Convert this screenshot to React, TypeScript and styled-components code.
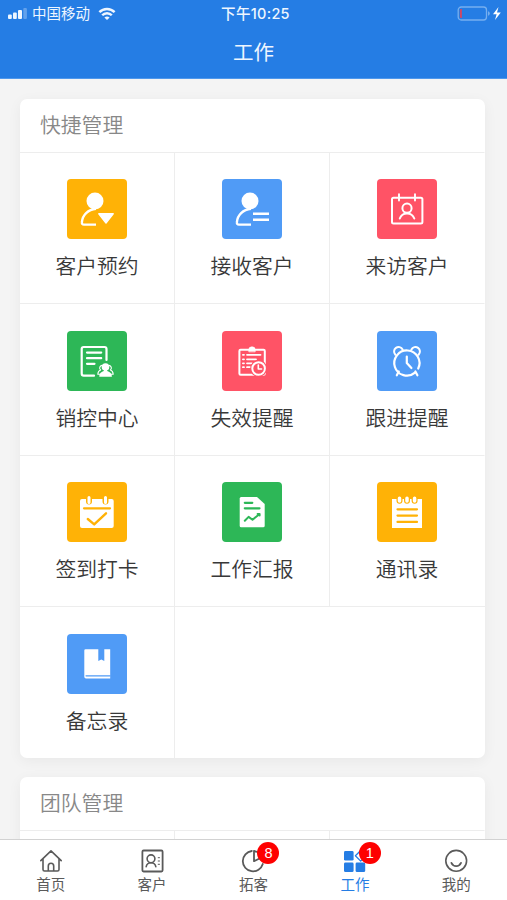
import React from 'react';
import styled, { createGlobalStyle } from 'styled-components';

const YELLOW = '#ffb206';
const BLUE = '#509bf6';
const RED = '#ff5366';
const GREEN = '#2db757';
const PRIMARY = '#257de4';

const GlobalStyle = createGlobalStyle`
  * { box-sizing: border-box; }
  body {
    margin: 0;
    background: #f4f4f4;
    font-family: Inter, "Noto Sans CJK SC", sans-serif;
  }
`;

const Screen = styled.div`
  display: flex;
  flex-direction: column;
  height: 900px;
  overflow: hidden;
`;

const Header = styled.header`
  flex: none;
  height: 79px;
  background: ${PRIMARY};
  color: #eef6ff;
  border-bottom: 1px solid #4f98ec;
`;

const StatusBar = styled.div`
  display: grid;
  grid-template-columns: 1fr auto 1fr;
  align-items: center;
  height: 27px;
  padding: 0 5px 0 8px;
  font-size: 14.5px;
  line-height: 27px;
`;

const Carrier = styled.div`
  display: flex;
  align-items: center;
  gap: 5px;
  span + svg { margin-left: 3px; }
`;

const Clock = styled.div`
  font-size: 14.5px;
  font-weight: 500;
  letter-spacing: 0.3px;
  padding-left: 1px;
`;

const Power = styled.div`
  display: flex;
  justify-content: flex-end;
  align-items: center;
`;

const PageTitle = styled.h1`
  margin: 0;
  font-size: 20.5px;
  font-weight: 400;
  line-height: 52px;
  text-align: center;
`;

const Content = styled.main`
  flex: 1;
  min-height: 0;
  overflow: hidden;
  display: flex;
  flex-direction: column;
  gap: 19.5px;
  padding: 20px 22px 0 20px;
`;

const Card = styled.section`
  flex: none;
  background: #fff;
  border-radius: 7px;
  box-shadow: 0 3px 14px rgba(0, 0, 0, 0.05);
  overflow: hidden;
`;

const CardTitle = styled.h2`
  margin: 0;
  height: 52.5px;
  padding-left: 20px;
  color: #888;
  font-size: 20.8px;
  font-weight: 350;
  line-height: 54px;
`;

const Grid = styled.div`
  display: grid;
  grid-template-columns: 155px 155px 155px;
  grid-auto-rows: 151.5px;
`;

const Cell = styled.div<{ $last?: boolean }>`
  display: flex;
  flex-direction: column;
  align-items: center;
  padding-top: 26.5px;
  border-top: 1px solid #ededed;
  border-right: 1px solid ${(p) => (p.$last ? 'transparent' : '#ededed')};
`;

const Filler = styled.div`
  grid-column: span 2;
  border-top: 1px solid #ededed;
`;

const Tile = styled.div<{ $color: string }>`
  width: 60px;
  height: 60px;
  border-radius: 4px;
  background: ${(p) => p.$color};
  color: ${(p) => p.$color};
  svg { display: block; }
`;

const CellLabel = styled.div`
  margin-top: 12px;
  color: #383838;
  font-size: 20.8px;
  font-weight: 350;
  line-height: 32px;
`;

const TabBar = styled.nav`
  flex: none;
  display: grid;
  grid-template-columns: repeat(5, 1fr);
  height: 61px;
  background: #fff;
  border-top: 1px solid #d2d2d2;
`;

const Tab = styled.div<{ $active?: boolean }>`
  display: flex;
  flex-direction: column;
  align-items: center;
  padding-top: 9px;
  color: ${(p) => (p.$active ? PRIMARY : '#5a5a5a')};
`;

const TabIcon = styled.div`
  position: relative;
  width: 24px;
  height: 24px;
  svg { display: block; }
`;

const TabLabel = styled.div`
  font-size: 14.5px;
  line-height: 24px;
  white-space: nowrap;
`;

const Badge = styled.span`
  position: absolute;
  left: 16px;
  top: -7px;
  width: 22px;
  height: 22px;
  border-radius: 50%;
  background: #fe0000;
  color: #fff;
  font-family: "Liberation Sans", sans-serif;
  font-size: 14.5px;
  line-height: 22px;
  text-align: center;
`;

const Glyph = ({ children }: { children: React.ReactNode }) => (
  <svg width="60" height="60" viewBox="0 0 60 60" fill="none" stroke="#fff" strokeWidth="2.2" strokeLinecap="round" strokeLinejoin="round">
    {children}
  </svg>
);

const Person = () => (
  <>
    <circle cx="28" cy="22" r="8.5" fill="#fff" stroke="none" />
    <path d="M29 29.8C21 30.3 15.4 36.5 14.9 43.2Q14.6 45.6 17 45.6H29" strokeLinecap="butt" strokeWidth="2.4" />
  </>
);

const items = [
  {
    label: '客户预约', color: YELLOW,
    icon: <Glyph><Person /><path d="M31.8 34.8H46.2L39 44Z" fill="#fff" strokeWidth="1.4" /></Glyph>,
  },
  {
    label: '接收客户', color: BLUE,
    icon: <Glyph><Person /><path d="M31 34.8H47M31 40.8H47" strokeLinecap="butt" strokeWidth="2.6" /></Glyph>,
  },
  {
    label: '来访客户', color: RED,
    icon: (
      <Glyph>
        <rect x="15" y="18.8" width="30.4" height="25.8" rx="1.5" strokeWidth="2" />
        <path d="M22 15.3V21.5M38 15.3V21.5" strokeWidth="1.9" />
        <circle cx="30" cy="29.2" r="4.6" strokeWidth="2" />
        <path d="M22.8 39.5C24 36 26.5 34.4 30 34.4S36 36 37.3 39.5" strokeWidth="2" />
      </Glyph>
    ),
  },
  {
    label: '销控中心', color: GREEN,
    icon: (
      <Glyph>
        <path d="M39.5 29V18Q39.5 16 37.5 16H16.7Q14.7 16 14.7 18V42.5Q14.7 44.7 16.7 44.7H27" />
        <path d="M20 21.6H34.2M20 27.2H34.2M20 32.8H27.5" />
        <path d="M35 34.4A2.6 2.6 0 0 0 33.6 39Q31 40 30.8 43.2H33M42 34.4A2.6 2.6 0 0 1 43.4 39Q46 40 46.2 43.2H44" strokeWidth="1.1" />
        <circle cx="38.5" cy="36" r="3.8" fill="#fff" stroke="none" />
        <path d="M32.3 45.7C32.3 42 34.5 40.8 37 40V38H40V40C42.5 40.8 44.9 42 44.9 45.7Z" fill="#fff" stroke="none" />
      </Glyph>
    ),
  },
  {
    label: '失效提醒', color: RED,
    icon: (
      <Glyph>
        <rect x="17.4" y="18.8" width="25.4" height="25" rx="1.2" strokeWidth="2" />
        <path d="M26.8 20.5V18.6Q26.8 15.8 30 15.8T33.2 18.6V20.5Z" fill="#fff" strokeWidth="0.6" />
        <path d="M20.9 23.8H22M20.9 28.3H22M20.9 32.3H22M20.9 36.2H22" strokeWidth="1.8" />
        <path d="M25 23.8H38.5M25 28.3H34M25 32.3H30M25 36.2H28" strokeWidth="1.8" />
        <circle cx="36.6" cy="37.5" r="8.4" fill="currentColor" stroke="none" />
        <circle cx="36.6" cy="37.5" r="6.3" strokeWidth="2" />
        <path d="M36.3 34V38H39.6" strokeWidth="1.6" />
      </Glyph>
    ),
  },
  {
    label: '跟进提醒', color: BLUE,
    icon: (
      <Glyph>
        <path d="M18.4 23.7A4.5 4.5 0 1 1 25.6 18.5M34.4 18.5A4.5 4.5 0 1 1 41.6 23.7" strokeWidth="2" />
        <path d="M38 41.7A12.6 12.6 0 1 1 41.2 37.6" />
        <path d="M29.8 25.5V32L34.4 37" />
        <path d="M21.8 40.5L19.8 44.3M38.4 40.5L40.4 44.3" />
      </Glyph>
    ),
  },
  {
    label: '签到打卡', color: YELLOW,
    icon: (
      <Glyph>
        <rect x="13" y="17" width="33.7" height="29" rx="2" fill="#fff" stroke="none" />
        <path d="M22 16.5V19.5M38.5 16.5V19.5" stroke="currentColor" strokeWidth="6" />
        <path d="M22 15.5V20.5M38.5 15.5V20.5" strokeWidth="3" />
        <path d="M17 26.3H43" stroke="currentColor" />
        <path d="M20.8 37L27.2 42.4L39 31.3" stroke="currentColor" strokeWidth="2.4" />
      </Glyph>
    ),
  },
  {
    label: '工作汇报', color: GREEN,
    icon: (
      <Glyph>
        <path d="M19.2 15H35L42.7 22V43.8Q42.7 45.3 41.2 45.3H19.2Q17.7 45.3 17.7 43.8V16.5Q17.7 15 19.2 15Z" fill="#fff" stroke="none" />
        <path d="M22.8 20.8H30.3M22.8 26.3H37.5" stroke="currentColor" />
        <path d="M22.8 38.8L26.6 34.9L30.5 37.8L37.3 32.2M35.6 31.9H37.6V33.6" stroke="currentColor" strokeWidth="2" />
      </Glyph>
    ),
  },
  {
    label: '通讯录', color: YELLOW,
    icon: (
      <Glyph>
        <path d="M15 17H45V46H15Z" fill="#fff" stroke="none" />
        <path d="M22.5 16.5V18.8M30 16.5V18.8M37.6 16.5V18.8" stroke="currentColor" strokeWidth="6" />
        <path d="M22.5 16.3V19M30 16.3V19M37.6 16.3V19" strokeWidth="3.5" />
        <path d="M20.5 27.3H40M20.5 33.6H40M20.5 39.9H40" stroke="currentColor" strokeWidth="2.2" />
      </Glyph>
    ),
  },
  {
    label: '备忘录', color: BLUE,
    icon: (
      <Glyph>
        <path d="M18.6 15.2H31.3V27L34.3 25.5L37.3 27V15.2H43.2V44.5H19Q17.3 44.5 17.3 42.8V16.5Q17.3 15.2 18.6 15.2Z" fill="#fff" stroke="none" />
        <path d="M19 41.8H43.2" stroke="currentColor" strokeWidth="1.2" />
      </Glyph>
    ),
  },
];

const TabGlyph = ({ children }: { children: React.ReactNode }) => (
  <svg width="24" height="24" viewBox="0 0 24 24" fill="none" stroke="currentColor" strokeWidth="1.6" strokeLinecap="round" strokeLinejoin="round">
    {children}
  </svg>
);

const tabs = [
  {
    label: '首页',
    icon: <TabGlyph><path d="M1.8 11.6L12 1.8L22.2 11.6M4 10V20.5Q4 22 5.5 22H18.5Q20 22 20 20.5V10M9.3 22V17Q9.3 14.3 12 14.3T14.7 17V22" /></TabGlyph>,
  },
  {
    label: '客户',
    icon: (
      <TabGlyph>
        <rect x="2.4" y="1.5" width="20.2" height="21" rx="1.2" strokeWidth="1.8" />
        <circle cx="11" cy="9.8" r="3.9" />
        <path d="M6.2 17.6Q7 13.7 11 13.7T15.8 17.6" />
        <path d="M18.2 8.7H19.5M18.2 12H19.5M18.2 15.3H19.5" strokeWidth="1" />
      </TabGlyph>
    ),
  },
  {
    label: '拓客', badge: 8,
    icon: <TabGlyph><path d="M10.8 2A10.2 10.2 0 1 0 21.8 15" strokeWidth="1.8" /><path d="M13 1.8V12.2L20.5 8.5M13 1.8A10 10 0 0 1 20.5 8.5" strokeWidth="1.8" /></TabGlyph>,
  },
  {
    label: '工作', badge: 1, active: true,
    icon: (
      <TabGlyph>
        <g fill="currentColor" stroke="none">
          <rect x="1" y="2" width="9.6" height="9.6" rx="1.4" />
          <rect x="1" y="13.5" width="9.6" height="9.6" rx="1.4" />
          <rect x="12.6" y="13.5" width="9.6" height="9.6" rx="1.4" />
        </g>
        <path d="M12.4 6.8L17.7 1.5L23 6.8L17.7 12.1Z" strokeWidth="1.3" />
      </TabGlyph>
    ),
  },
  {
    label: '我的',
    icon: <TabGlyph><circle cx="12.2" cy="11.8" r="10.4" /><path d="M7.4 13.9Q8.9 17.2 12.2 17.2T17 13.9" strokeWidth="1.8" /></TabGlyph>,
  },
];

export default function App() {
  return (
    <Screen>
      <GlobalStyle />
      <Header>
        <StatusBar>
          <Carrier>
            <svg width="19" height="12" viewBox="0 0 19 12" fill="#eef6ff">
              <rect x="0" y="6.5" width="3.8" height="4.5" rx="1" />
              <rect x="5" y="4.5" width="3.8" height="6.5" rx="1" />
              <rect x="10" y="2" width="4" height="9" rx="1" />
              <rect x="15.3" y="0" width="3.6" height="11" rx="1" opacity="0.3" />
            </svg>
            <span>中国移动</span>
            <svg width="18" height="14" viewBox="1 0 18 14" fill="none" stroke="#eef6ff" strokeWidth="2.4">
              <path d="M2.4 5.2A10.5 10.5 0 0 1 17.6 5.2M5.2 8.3A6.5 6.5 0 0 1 14.8 8.3" />
              <path d="M10 12.9L7.4 10.4Q10 8.5 12.6 10.4Z" fill="#eef6ff" stroke="none" />
            </svg>
          </Carrier>
          <Clock>下午10:25</Clock>
          <Power>
            <svg width="45" height="15" viewBox="0 0 45 15">
              <rect x="1.2" y="1" width="28.3" height="13" rx="3" fill="none" stroke="#76afef" strokeWidth="1.3" />
              <path d="M31 5.3Q32.8 5.5 32.8 7.5T31 9.7Z" fill="#76afef" />
              <path d="M4.9 3H4Q2.9 3 2.9 4.2V10.8Q2.9 12 4 12H4.9Z" fill="#cf4866" />
              <path d="M41.5 1L36 8.3H39.6L38 14L43.8 6.5H40Z" fill="#fff" />
            </svg>
          </Power>
        </StatusBar>
        <PageTitle>工作</PageTitle>
      </Header>
      <Content>
        <Card>
          <CardTitle>快捷管理</CardTitle>
          <Grid>
            {items.map((item, i) => (
              <Cell key={item.label} $last={i % 3 === 2}>
                <Tile $color={item.color}>{item.icon}</Tile>
                <CellLabel>{item.label}</CellLabel>
              </Cell>
            ))}
            <Filler />
          </Grid>
        </Card>
        <Card>
          <CardTitle>团队管理</CardTitle>
          <Grid>
            <Cell />
            <Cell />
            <Cell $last />
          </Grid>
        </Card>
      </Content>
      <TabBar>
        {tabs.map((tab) => (
          <Tab key={tab.label} $active={tab.active}>
            <TabIcon>
              {tab.icon}
              {tab.badge && <Badge>{tab.badge}</Badge>}
            </TabIcon>
            <TabLabel>{tab.label}</TabLabel>
          </Tab>
        ))}
      </TabBar>
    </Screen>
  );
}
